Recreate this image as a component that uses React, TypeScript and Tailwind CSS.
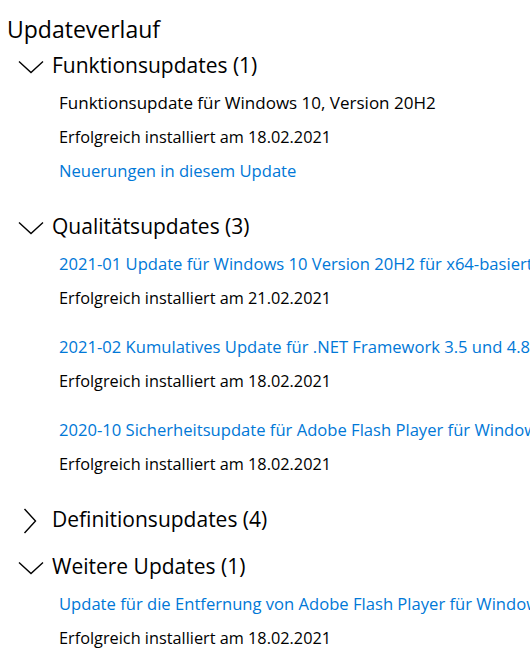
import React from "react";

type Entry = { title: string; link?: boolean; status?: string; extra?: string };
type Group = { name: string; open: boolean; entries: Entry[]; gapTop: string };

const groups: Group[] = [
  {
    name: "Funktionsupdates (1)",
    open: true,
    gapTop: "mt-0",
    entries: [
      {
        title: "Funktionsupdate für Windows 10, Version 20H2",
        status: "Erfolgreich installiert am 18.02.2021",
        extra: "Neuerungen in diesem Update",
      },
    ],
  },
  {
    name: "Qualitätsupdates (3)",
    open: true,
    gapTop: "mt-[21px]",
    entries: [
      {
        title: "2021-01 Update für Windows 10 Version 20H2 für x64-basierte Systeme (KB4023057)",
        link: true,
        status: "Erfolgreich installiert am 21.02.2021",
      },
      {
        title: "2021-02 Kumulatives Update für .NET Framework 3.5 und 4.8 für Windows 10, Version 20H2 für x64",
        link: true,
        status: "Erfolgreich installiert am 18.02.2021",
      },
      {
        title: "2020-10 Sicherheitsupdate für Adobe Flash Player für Windows 10 Version 20H2 für x64-basierte Systeme",
        link: true,
        status: "Erfolgreich installiert am 18.02.2021",
      },
    ],
  },
  { name: "Definitionsupdates (4)", open: false, gapTop: "mt-[21px]", entries: [] },
  {
    name: "Weitere Updates (1)",
    open: true,
    gapTop: "mt-[9px]",
    entries: [
      {
        title: "Update für die Entfernung von Adobe Flash Player für Windows 10 Version 20H2 für x64-basierte Systeme",
        link: true,
        status: "Erfolgreich installiert am 18.02.2021",
      },
    ],
  },
];

function ChevronDown() {
  return (
    <svg width="26" height="14" viewBox="0 0 26 14" className="shrink-0">
      <path d="M1 1.5 L13 12.5 L25 1.5" fill="none" stroke="#000" strokeWidth="1.4" />
    </svg>
  );
}

function ChevronRight() {
  return (
    <svg width="14" height="26" viewBox="0 0 14 26" className="shrink-0">
      <path d="M1.5 1 L12.5 13 L1.5 25" fill="none" stroke="#000" strokeWidth="1.4" />
    </svg>
  );
}

function Row({ text, kind }: { text: string; kind: "plain" | "link" | "status" }) {
  const cls =
    kind === "link"
      ? "text-[16.6px] text-[#0078d7]"
      : kind === "status"
      ? "text-[16.3px] text-black"
      : "text-[17px] text-black";
  return <div className={`h-[34px] flex items-center whitespace-nowrap ${cls}`}>{text}</div>;
}

export default function App() {
  return (
    <div
      className="w-[530px] h-[658px] overflow-hidden bg-white text-black"
      style={{ fontFamily: '"Open Sans", "Noto Sans", sans-serif' }}
    >
      <div className="pt-[10px] pl-[7px] h-[48px] flex items-center text-[23px] leading-none">
        Updateverlauf
      </div>

      {groups.map((g) => (
        <div key={g.name} className={g.gapTop}>
          <div className="h-[36px] flex items-center">
            <div className="w-[52px] flex justify-start">
              {g.open ? (
                <div className="pl-[18px] pt-[2px]">
                  <ChevronDown />
                </div>
              ) : (
                <div className="pl-[23px] pt-[2px]">
                  <ChevronRight />
                </div>
              )}
            </div>
            <span className="text-[21px] whitespace-nowrap">{g.name}</span>
          </div>
          <div className="pl-[59px] pt-[2px] flex flex-col gap-[15px]">
            {g.entries.map((e) => (
              <div key={e.title}>
                <Row text={e.title} kind={e.link ? "link" : "plain"} />
                {e.status && <Row text={e.status} kind="status" />}
                {e.extra && <Row text={e.extra} kind="link" />}
              </div>
            ))}
          </div>
        </div>
      ))}
    </div>
  );
}
